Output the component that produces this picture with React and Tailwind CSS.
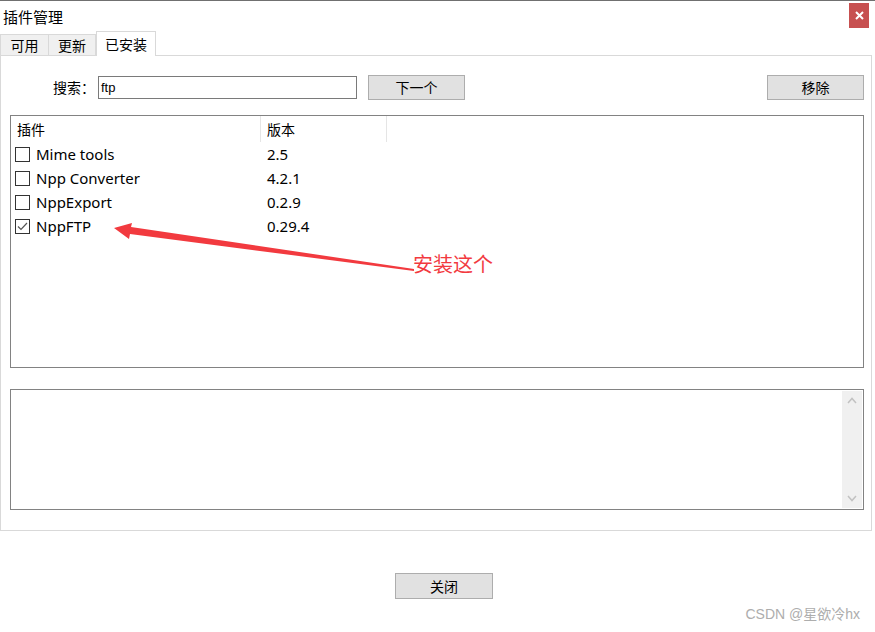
import React from 'react';

const rows = [
  { name: 'Mime tools', ver: '2.5', checked: false },
  { name: 'Npp Converter', ver: '4.2.1', checked: false },
  { name: 'NppExport', ver: '0.2.9', checked: false },
  { name: 'NppFTP', ver: '0.29.4', checked: true },
];

const Check = ({ checked }) => (
  <span className="w-[15px] h-[15px] border border-[#333333] bg-white flex items-center justify-center shrink-0">
    {checked && (
      <svg width="13" height="13" viewBox="0 0 13 13">
        <path d="M2 6.5 L5 9.5 L11 3" fill="none" stroke="#555555" strokeWidth="1.2" />
      </svg>
    )}
  </span>
);

const Btn = ({ children, className = '' }) => (
  <button className={`h-[25px] w-[97px] bg-[#e1e1e1] border border-[#adadad] text-[14px] text-black flex items-center justify-center ${className}`}>
    {children}
  </button>
);

export default function App() {
  return (
    <div className="relative w-[875px] h-[632px] bg-white overflow-hidden border-t border-[#707070] font-['Noto_Sans','Noto_Sans_CJK_SC',sans-serif] text-black">
      {/* title bar */}
      <div className="h-[30px] flex justify-between items-start">
        <span className="pl-[3px] pt-[7px] text-[15px] leading-[18px]">插件管理</span>
        <button className="mt-[2px] mr-[6px] w-[20px] h-[25px] bg-[#c75050] flex items-center justify-center">
          <svg width="9" height="9" viewBox="0 0 9 9">
            <path d="M1 1 L8 8 M8 1 L1 8" stroke="#ffffff" strokeWidth="2" />
          </svg>
        </button>
      </div>

      {/* tabs */}
      <div className="h-[24px] flex items-end relative z-10">
        <div className="h-[21px] w-[49px] bg-[#f0f0f0] border border-[#d9d9d9] border-b-0 flex items-center justify-center text-[14px]">可用</div>
        <div className="h-[21px] w-[47px] bg-[#f0f0f0] border-t border-r border-[#d9d9d9] flex items-center justify-center text-[14px]">更新</div>
        <div className="h-[25px] w-[60px] bg-white border border-[#d9d9d9] border-b-0 -mb-[1px] flex items-center justify-center text-[14px]">已安装</div>
      </div>

      {/* panel */}
      <div className="w-[872px] h-[476px] border border-[#d9d9d9] bg-white pl-[9px] pr-[7px] pt-[19px]">
        <div className="flex items-center h-[25px]">
          <span className="ml-[43px] text-[14px] w-[45px]">搜索：</span>
          <div className="h-[23px] w-[259px] border border-[#7a7a7a] flex items-center pl-[2px] text-[13px] font-['Liberation_Sans',sans-serif]">ftp</div>
          <Btn className="ml-[11px]">下一个</Btn>
          <Btn className="ml-auto">移除</Btn>
        </div>

        <div className="mt-[15px] h-[253px] border border-[#828282] bg-white">
          <div className="h-[26px] flex text-[14px]">
            <div className="w-[250px] border-r border-[#e5e5e5] pl-[6px] flex items-center">插件</div>
            <div className="w-[126px] border-r border-[#e5e5e5] pl-[6px] flex items-center">版本</div>
          </div>
          {rows.map((r) => (
            <div key={r.name} className="h-[24px] flex items-center text-[15px]">
              <div className="w-[250px] pl-[4px] flex items-center gap-[6px]">
                <Check checked={r.checked} />
                <span>{r.name}</span>
              </div>
              <div className="pl-[6px]">{r.ver}</div>
            </div>
          ))}
        </div>

        <div className="mt-[21px] h-[121px] border border-[#828282] bg-white flex justify-end p-[1px]">
          <div className="w-[20px] h-full bg-[#f0f0f0] flex flex-col items-center justify-between py-[6px]">
            <svg width="10" height="7" viewBox="0 0 10 7">
              <path d="M1 6 L5 1.5 L9 6" fill="none" stroke="#c2c2c2" strokeWidth="1.5" />
            </svg>
            <svg width="10" height="7" viewBox="0 0 10 7">
              <path d="M1 1 L5 5.5 L9 1" fill="none" stroke="#c2c2c2" strokeWidth="1.5" />
            </svg>
          </div>
        </div>
      </div>

      {/* footer */}
      <div className="pt-[42px] pl-[395px]">
        <Btn className="w-[98px] h-[26px]">关闭</Btn>
      </div>

      {/* annotation */}
      <svg className="absolute left-0 top-0 pointer-events-none" width="875" height="632">
        <polygon points="114,227 132,222 131,226 414,268 414,270 130,233 129,238" fill="#f23a3f" />
      </svg>
      <span className="absolute left-[413px] top-[252px] text-[20px] leading-[24px] text-[#f23a3f]">安装这个</span>

      {/* watermark */}
      <span className="absolute right-[15px] top-[603px] text-[14px] text-[#adadad] font-['Liberation_Sans','Noto_Sans_CJK_SC',sans-serif]">CSDN @星欲冷hx</span>
    </div>
  );
}
